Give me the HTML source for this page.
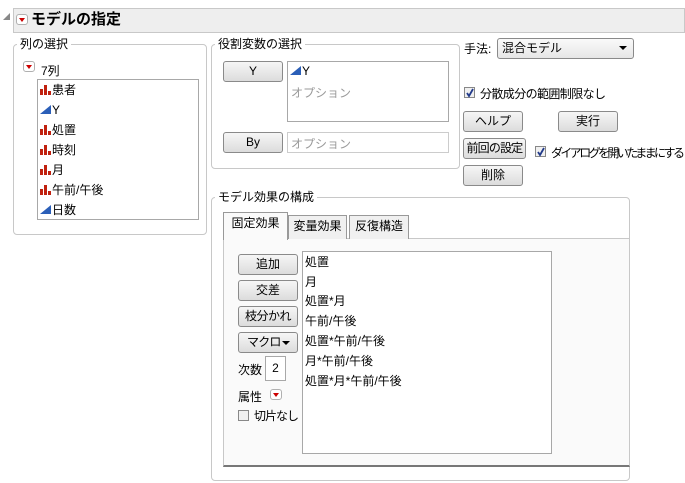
<!DOCTYPE html>
<html><head><meta charset="utf-8"><style>
*{box-sizing:border-box;margin:0;padding:0}
body{width:685px;height:483px;background:#fff;font-family:"Liberation Sans","Noto Sans CJK JP",sans-serif;font-size:12px;color:#000;position:relative;overflow:hidden}
.a{position:absolute;white-space:nowrap}
.grp{position:absolute;border:1px solid #c8c8c8;border-radius:4px}
.lbl{position:absolute;background:#fff;padding:0 3px;font-size:12px;line-height:14px}
.btn{position:absolute;border:1px solid #8a8a8a;border-radius:3px;background:linear-gradient(#f6f6f6,#dcdcdc);text-align:center;font-size:12px;line-height:18px}
.box{position:absolute;border:1px solid #a8a8a8;background:#fff}
.red{position:absolute;width:12px;height:11px;border:1px solid #b0b0b0;border-radius:3px;background:#fff}
.red:after{content:"";position:absolute;left:2px;top:3px;border-left:3px solid transparent;border-right:3px solid transparent;border-top:4px solid #c00}
.cb{position:absolute;width:11px;height:11px;border:1px solid #888;background:#f0f0f0}
.cb svg{position:absolute;left:0;top:0}
.bar{display:inline-block;width:11px;height:10px;vertical-align:-1px;margin-right:1px;position:relative}
.bar i{position:absolute;bottom:0;width:3px;background:#c0200e}
.tri{display:inline-block;width:0;height:0;border-left:11px solid transparent;border-bottom:9px solid #2b5fb8;vertical-align:0;margin-right:1px}
.it{position:absolute;left:2px;line-height:20px}
</style></head><body>
<div class="a" style="left:3px;top:13px;width:0;height:0;border-left:7px solid transparent;border-bottom:7px solid #888"></div>
<div class="a" style="left:13px;top:8px;width:672px;height:25px;background:#eeeeee;border:1px solid #c8c8c8"></div>
<div class="red" style="left:16px;top:14px"></div>
<div class="a" style="left:31px;top:10px;font-size:15px;font-weight:bold;line-height:20px">モデルの指定</div>

<div class="grp" style="left:13px;top:44px;width:194px;height:191px"></div>
<div class="lbl" style="left:17px;top:37px">列の選択</div>
<div class="red" style="left:23px;top:61px"></div>
<div class="a" style="left:41px;top:62px">7列</div>
<div class="box" style="left:37px;top:79px;width:162px;height:141px">
<div class="it" style="top:0"><span class="bar"><i style="left:0;height:6px"></i><i style="left:4px;height:10px"></i><i style="left:8px;height:4px"></i></span>患者</div>
<div class="it" style="top:20px"><span class="tri"></span>Y</div>
<div class="it" style="top:40px"><span class="bar"><i style="left:0;height:6px"></i><i style="left:4px;height:10px"></i><i style="left:8px;height:4px"></i></span>処置</div>
<div class="it" style="top:60px"><span class="bar"><i style="left:0;height:6px"></i><i style="left:4px;height:10px"></i><i style="left:8px;height:4px"></i></span>時刻</div>
<div class="it" style="top:80px"><span class="bar"><i style="left:0;height:6px"></i><i style="left:4px;height:10px"></i><i style="left:8px;height:4px"></i></span>月</div>
<div class="it" style="top:100px"><span class="bar"><i style="left:0;height:6px"></i><i style="left:4px;height:10px"></i><i style="left:8px;height:4px"></i></span>午前/午後</div>
<div class="it" style="top:120px"><span class="tri"></span>日数</div>
</div>

<div class="grp" style="left:211px;top:44px;width:249px;height:125px"></div>
<div class="lbl" style="left:215px;top:37px">役割変数の選択</div>
<div class="btn" style="left:223px;top:61px;width:60px;height:21px">Y</div>
<div class="box" style="left:287px;top:61px;width:162px;height:61px">
<div class="a" style="left:2px;top:2px"><span class="tri"></span>Y</div>
<div class="a" style="left:3px;top:22px;color:#999">オプション</div></div>
<div class="btn" style="left:223px;top:132px;width:60px;height:21px">By</div>
<div class="box" style="left:287px;top:132px;width:162px;height:21px;border-color:#ccc"><div class="a" style="left:3px;top:2px;color:#999">オプション</div></div>

<div class="a" style="left:464px;top:40px">手法:</div>
<div class="btn" style="left:497px;top:38px;width:137px;height:21px;text-align:left;padding-left:4px;background:linear-gradient(#fafafa,#e6e6e6)">混合モデル</div>
<div class="a" style="left:619px;top:46px;border-left:4px solid transparent;border-right:4px solid transparent;border-top:4px solid #000"></div>
<div class="cb" style="left:464px;top:87px"><svg width="10" height="10"><path d="M2 5 L4 8 L8 1" stroke="#223a8a" stroke-width="1.8" fill="none"/></svg></div>
<div class="a" style="left:480px;top:85px;letter-spacing:-0.6px">分散成分の範囲制限なし</div>
<div class="btn" style="left:463px;top:111px;width:60px;height:21px">ヘルプ</div>
<div class="btn" style="left:558px;top:111px;width:60px;height:21px">実行</div>
<div class="btn" style="left:463px;top:138px;width:63px;height:21px;letter-spacing:-0.8px">前回の設定</div>
<div class="cb" style="left:535px;top:146px"><svg width="10" height="10"><path d="M2 5 L4 8 L8 1" stroke="#223a8a" stroke-width="1.8" fill="none"/></svg></div>
<div class="a" style="left:551px;top:144px;letter-spacing:-2.6px">ダイアログを開いたままにする</div>
<div class="btn" style="left:463px;top:165px;width:60px;height:21px">削除</div>

<div class="grp" style="left:211px;top:197px;width:419px;height:284px"></div>
<div class="lbl" style="left:215px;top:190px">モデル効果の構成</div>
<div class="a" style="left:223px;top:238px;width:407px;height:229px;border:1px solid #c8c8c8;border-bottom:2px solid #777;background:#fafafa"></div>
<div class="a" style="left:288px;top:215px;width:59px;height:24px;border:1px solid #999;border-bottom:none;background:#f0f0f0;text-align:center;line-height:20px">変量効果</div>
<div class="a" style="left:349px;top:215px;width:60px;height:24px;border:1px solid #999;border-bottom:none;background:#f0f0f0;text-align:center;line-height:20px">反復構造</div>
<div class="a" style="left:223px;top:212px;width:65px;height:28px;border:1px solid #999;border-bottom:none;background:#fafafa;text-align:center;line-height:20px">固定効果</div>

<div class="btn" style="left:238px;top:254px;width:60px;height:21px">追加</div>
<div class="btn" style="left:238px;top:280px;width:60px;height:21px">交差</div>
<div class="btn" style="left:238px;top:306px;width:60px;height:21px;letter-spacing:-0.5px">枝分かれ</div>
<div class="btn" style="left:238px;top:332px;width:60px;height:21px;text-align:left;padding-left:8px;letter-spacing:-0.8px">マクロ</div>
<div class="a" style="left:282px;top:341px;border-left:4px solid transparent;border-right:4px solid transparent;border-top:4px solid #000"></div>
<div class="a" style="left:238px;top:361px">次数</div>
<div class="box" style="left:265px;top:356px;width:21px;height:25px;text-align:center;line-height:22px">2</div>
<div class="a" style="left:238px;top:388px">属性</div>
<div class="red" style="left:270px;top:389px"></div>
<div class="cb" style="left:238px;top:410px"></div>
<div class="a" style="left:254px;top:407px;letter-spacing:-1px">切片なし</div>

<div class="box" style="left:302px;top:251px;width:250px;height:203px">
<div class="it" style="top:0">処置</div>
<div class="it" style="top:20px">月</div>
<div class="it" style="top:39px">処置*月</div>
<div class="it" style="top:59px">午前/午後</div>
<div class="it" style="top:79px">処置*午前/午後</div>
<div class="it" style="top:99px">月*午前/午後</div>
<div class="it" style="top:119px">処置*月*午前/午後</div>
</div>
</body></html>
